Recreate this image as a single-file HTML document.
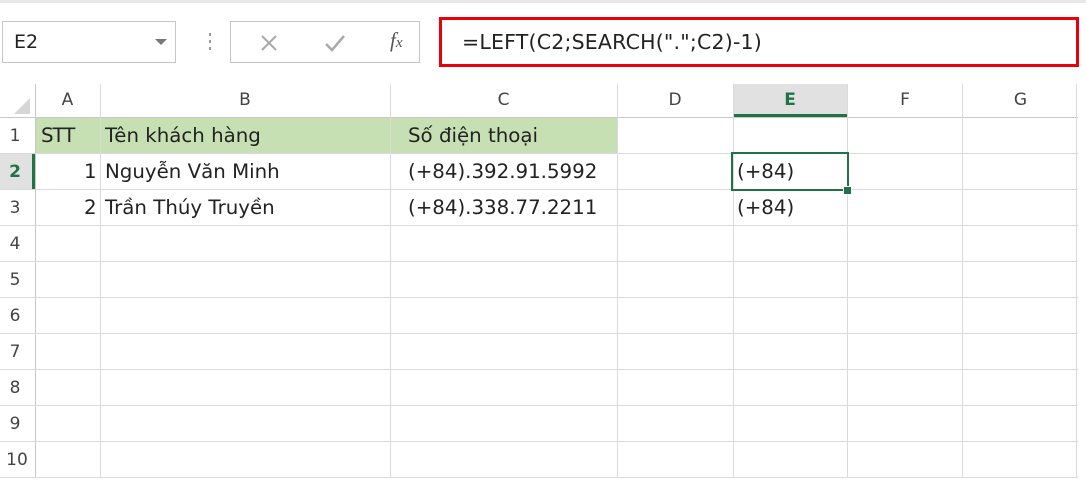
<!DOCTYPE html>
<html><head><meta charset="utf-8"><style>
body{margin:0;width:1086px;height:482px;background:#fff;position:relative;overflow:hidden;font-family:"DejaVu Sans","Liberation Sans",sans-serif;}
.a{position:absolute;}
.t{position:absolute;font-size:19.8px;color:#222;white-space:nowrap;}
.h{position:absolute;font-size:17px;color:#444;text-align:center;}
.vl{position:absolute;width:1px;background:#dadada;}
.hl{position:absolute;height:1px;background:#dadada;}
</style></head><body>
<div class="a" style="left:0;top:0;width:1086px;height:3px;background:#e8e8e8"></div>
<div class="a" style="left:2px;top:21px;width:174px;height:42px;border:1px solid #c6c6c6;box-sizing:border-box"></div>
<div class="t" style="left:14px;top:31px;font-size:19px">E2</div>
<div class="a" style="left:155px;top:39px;width:0;height:0;border-left:6px solid transparent;border-right:6px solid transparent;border-top:6px solid #777"></div>
<div class="a" style="left:209px;top:33px;width:2px;height:3px;background:#999"></div>
<div class="a" style="left:209px;top:40px;width:2px;height:3px;background:#999"></div>
<div class="a" style="left:209px;top:47px;width:2px;height:3px;background:#999"></div>
<div class="a" style="left:230px;top:21px;width:190px;height:42px;border:1px solid #c6c6c6;box-sizing:border-box"></div>
<svg class="a" style="left:258px;top:32px" width="110" height="22"><path d="M4 4L18 18M18 4L4 18" stroke="#aaa" stroke-width="2"/><path d="M68 12L74 18L86 4" stroke="#aaa" stroke-width="2.5" fill="none"/></svg>
<div class="t" style="left:390px;top:28px;font-family:'Liberation Serif',serif;font-style:italic;font-size:21px;color:#555">f<span style="font-size:15px">x</span></div>
<div class="a" style="left:439px;top:17px;width:640px;height:50px;border:3px solid #e8000a;box-sizing:border-box"></div>
<div class="t" style="left:462px;top:30px;font-size:20.5px;letter-spacing:0.2px">=LEFT(C2;SEARCH(".";C2)-1)</div>
<div class="a" style="left:733px;top:84px;width:114px;height:33px;background:#e1e1e1"></div>
<div class="a" style="left:733px;top:114px;width:114px;height:3px;background:#217346"></div>
<svg class="a" style="left:12px;top:96px" width="20" height="20"><path d="M18 2L18 18L2 18Z" fill="#d6d6d6"/></svg>
<div class="hl" style="left:0;top:117px;width:1078px;background:#c8c8c8"></div>
<div class="h" style="left:35px;top:90px;width:65px">A</div>
<div class="h" style="left:100px;top:90px;width:290px">B</div>
<div class="h" style="left:390px;top:90px;width:227px">C</div>
<div class="h" style="left:617px;top:90px;width:116px">D</div>
<div class="h" style="left:733px;top:90px;width:114px;color:#217346;font-weight:bold">E</div>
<div class="h" style="left:847px;top:90px;width:116px">F</div>
<div class="h" style="left:963px;top:90px;width:115px">G</div>
<div class="a" style="left:36px;top:118px;width:581px;height:35px;background:#c6e0b4"></div>
<div class="a" style="left:0;top:154px;width:35px;height:35px;background:#e1e1e1"></div>
<div class="a" style="left:32px;top:154px;width:3px;height:35px;background:#217346"></div>
<div class="vl" style="left:35px;top:84px;height:394px;background:#c8c8c8"></div>
<div class="vl" style="left:100px;top:84px;height:394px"></div>
<div class="vl" style="left:390px;top:84px;height:394px"></div>
<div class="vl" style="left:617px;top:84px;height:394px"></div>
<div class="vl" style="left:733px;top:84px;height:394px"></div>
<div class="vl" style="left:847px;top:84px;height:394px"></div>
<div class="vl" style="left:962px;top:84px;height:394px"></div>
<div class="vl" style="left:1076px;top:84px;height:394px"></div>
<div class="hl" style="left:0;top:153px;width:1078px"></div>
<div class="hl" style="left:0;top:189px;width:1078px"></div>
<div class="hl" style="left:0;top:225px;width:1078px"></div>
<div class="hl" style="left:0;top:261px;width:1078px"></div>
<div class="hl" style="left:0;top:297px;width:1078px"></div>
<div class="hl" style="left:0;top:333px;width:1078px"></div>
<div class="hl" style="left:0;top:369px;width:1078px"></div>
<div class="hl" style="left:0;top:405px;width:1078px"></div>
<div class="hl" style="left:0;top:441px;width:1078px"></div>
<div class="hl" style="left:0;top:477px;width:1078px"></div>
<div class="h" style="left:0;top:126px;width:30px">1</div>
<div class="h" style="left:0;top:162px;width:30px;color:#217346;font-weight:bold">2</div>
<div class="h" style="left:0;top:198px;width:30px">3</div>
<div class="h" style="left:0;top:234px;width:30px">4</div>
<div class="h" style="left:0;top:270px;width:30px">5</div>
<div class="h" style="left:0;top:306px;width:30px">6</div>
<div class="h" style="left:0;top:342px;width:30px">7</div>
<div class="h" style="left:0;top:378px;width:30px">8</div>
<div class="h" style="left:0;top:414px;width:30px">9</div>
<div class="h" style="left:0;top:450px;width:34px">10</div>
<div class="t" style="left:41px;top:124px;letter-spacing:-1px">STT</div>
<div class="t" style="left:105px;top:124px">Tên khách hàng</div>
<div class="t" style="left:408px;top:124px">Số điện thoại</div>
<div class="t" style="left:84px;top:160px">1</div>
<div class="t" style="left:105px;top:160px">Nguyễn Văn Minh</div>
<div class="t" style="left:408px;top:160px">(+84).392.91.5992</div>
<div class="t" style="left:84px;top:196px">2</div>
<div class="t" style="left:105px;top:196px">Trần Thúy Truyền</div>
<div class="t" style="left:408px;top:196px">(+84).338.77.2211</div>
<div class="t" style="left:737px;top:160px">(+84)</div>
<div class="t" style="left:737px;top:196px">(+84)</div>
<div class="a" style="left:731px;top:152px;width:118px;height:39px;border:2px solid #217346;box-sizing:border-box"></div>
<div class="a" style="left:843px;top:186px;width:7px;height:7px;background:#217346;border:1px solid #fff"></div>
</body></html>
